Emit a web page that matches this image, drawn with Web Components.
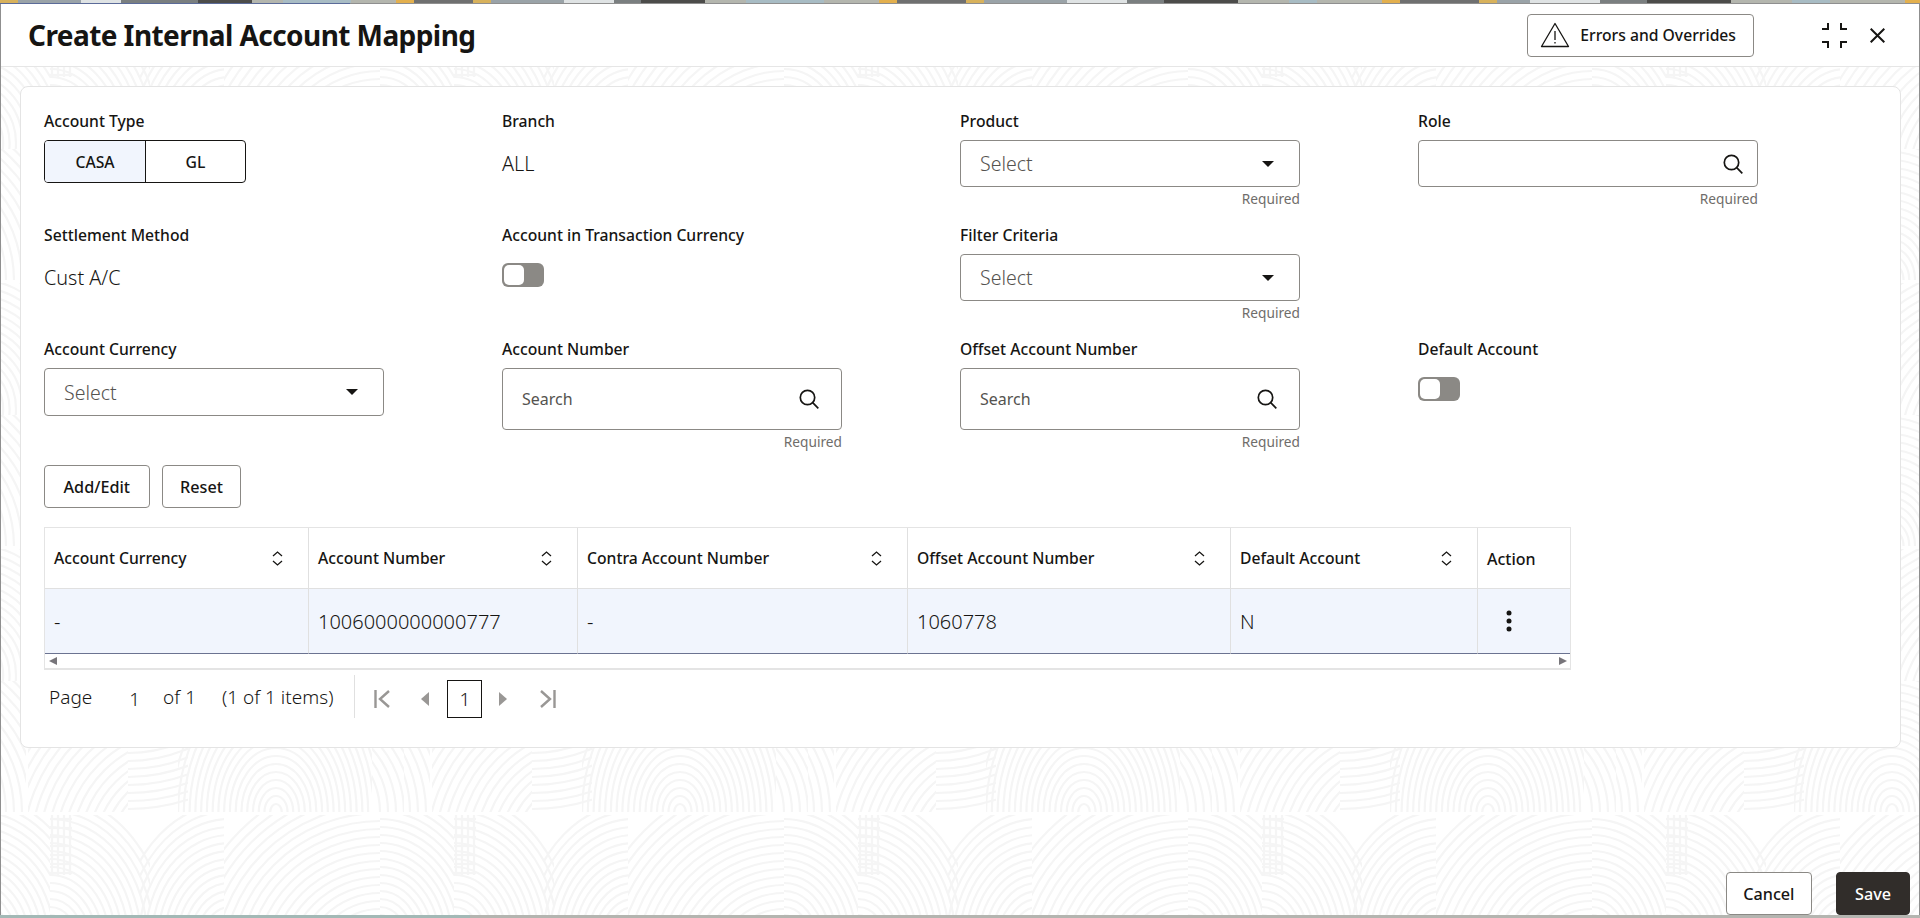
<!DOCTYPE html>
<html>
<head>
<meta charset="utf-8">
<title>Create Internal Account Mapping</title>
<style>
  html, body { margin: 0; height: 918px; overflow: hidden; background: #fff; }
  body { display: flex; flex-direction: column; font-family: "Noto Sans", "Open Sans", sans-serif; color: #161513; }
  im-dialog { flex: 1; min-height: 0; }
</style>
</head>
<body>
<im-strip></im-strip>
<im-dialog>
  <span slot="title">Create Internal Account Mapping</span>
  <im-button slot="actions" warn><im-icon name="warning"></im-icon>Errors and Overrides</im-button>
  <im-card>
    <im-form>
      <im-field label="Account Type"><im-segment></im-segment></im-field>
      <im-field label="Branch"><im-value>ALL</im-value></im-field>
      <im-field label="Product" hint="Required"><im-select></im-select></im-field>
      <im-field label="Role" hint="Required"><im-search kind="role"></im-search></im-field>

      <im-field label="Settlement Method"><im-value>Cust A/C</im-value></im-field>
      <im-field label="Account in Transaction Currency"><im-toggle></im-toggle></im-field>
      <im-field label="Filter Criteria" hint="Required"><im-select></im-select></im-field>
      <div></div>

      <im-field label="Account Currency"><im-select tall></im-select></im-field>
      <im-field label="Account Number" hint="Required"><im-search placeholder="Search"></im-search></im-field>
      <im-field label="Offset Account Number" hint="Required"><im-search placeholder="Search"></im-search></im-field>
      <im-field label="Default Account"><im-toggle></im-toggle></im-field>
    </im-form>
    <im-toolbar>
      <im-button pad="18.5">Add/Edit</im-button>
      <im-button pad="17.5">Reset</im-button>
    </im-toolbar>
    <im-table></im-table>
    <im-pager></im-pager>
  </im-card>
  <im-button slot="footer" pad="16.5">Cancel</im-button>
  <im-button slot="footer" pad="18" primary>Save</im-button>
</im-dialog>
<im-strip bottom></im-strip>

<script>
const ICONS = {
  warning: '<svg width="30" height="26" viewBox="0 0 30 26" fill="none" stroke="#161513" stroke-width="1.3"><path d="M15 1.5 L28.5 24.5 H1.5 Z" stroke-linejoin="round"/><path d="M15 9v9M15 20v1.6"/></svg>',
  collapse: '<svg width="25" height="25" viewBox="0 0 25 25" fill="none" stroke="#161513" stroke-width="2"><path d="M0 6h6V0M19 0v6h6M0 19h6v6M25 19h-6v6"/></svg>',
  close: '<svg width="15" height="15" viewBox="0 0 15 15" fill="none" stroke="#161513" stroke-width="2"><path d="M.7.7l13.6 13.6M14.3.7L.7 14.3"/></svg>',
  search: '<svg width="22" height="22" viewBox="0 0 22 22" fill="none" stroke="#161513" stroke-width="1.7"><circle cx="9.5" cy="9.5" r="7.2"/><path d="M14.7 14.7l5.6 5.6"/></svg>',
  caret: '<svg width="12" height="6" viewBox="0 0 12 6" fill="#161513"><path d="M0 0h12L6 6z"/></svg>',
  sort: '<svg width="11" height="15" viewBox="0 0 11 15" fill="none" stroke="#161513" stroke-width="1.3"><path d="M1 5l4.5-4 4.5 4M1 10l4.5 4 4.5-4"/></svg>',
  dots: '<svg width="6" height="22" viewBox="0 0 6 22" fill="#161513"><circle cx="3" cy="3" r="2.5"/><circle cx="3" cy="11" r="2.5"/><circle cx="3" cy="19" r="2.5"/></svg>',
  first: '<svg width="16" height="18" viewBox="0 0 16 18" fill="none" stroke="#999795" stroke-width="2.4"><path d="M1.5 0v18M15 1L6 9l9 8"/></svg>',
  prev: '<svg width="9" height="14" viewBox="0 0 9 14" fill="#999795"><path d="M9 0v14L1 7z"/></svg>',
  next: '<svg width="9" height="14" viewBox="0 0 9 14" fill="#999795"><path d="M0 0v14l8-7z"/></svg>',
  last: '<svg width="16" height="18" viewBox="0 0 16 18" fill="none" stroke="#999795" stroke-width="2.4"><path d="M14.5 0v18M1 1l9 8-9 8"/></svg>'
};

// base class, saves writing attachShadow everywhere
class ImElement extends HTMLElement {
  constructor() {
    super();
    this.attachShadow({ mode: 'open' });
  }

  connectedCallback() {
    this.render();
  }
}

class ImIcon extends ImElement {
  render() {
    this.shadowRoot.innerHTML = `
      <style>:host { display: inline-flex; } svg { display: block; }</style>
      ${ICONS[this.getAttribute('name')] || ''}
    `;
  }
}

class ImStrip extends ImElement {
  render() {
    // edges of the page that sits behind the dialog
    if (this.hasAttribute('bottom')) {
      this.shadowRoot.innerHTML = `
        <style>
          :host { display: block; flex: none; height: 3px; background: linear-gradient(90deg, #a3b9b6 0 470px, #b4b5b0 470px); }
        </style>
      `;
      return;
    }
    const colors = ['#d8b25c', '#9aa3a8', '#dfe3e4', '#7a7f80', '#4c4c4a', '#b4b6ae', '#a8bcc4', '#b4b6ae', '#e3b04e', '#6f7070'];
    const stops = [];
    for (let x = 0, i = 0; x < 1920; i++) {
      const w = i % colors.length === 0 || i % colors.length === 8 ? 18 : 26 + (i * 37) % 60;
      stops.push(`${colors[i % colors.length]} ${x}px ${x + w}px`);
      x += w;
    }
    this.shadowRoot.innerHTML = `
      <style>
        :host {
          display: block;
          flex: none;
          height: 4px;
          background:
            linear-gradient(90deg, #5b6b99 0 350px, #8f8f8f 350px) 0 100% / 100% 1px no-repeat,
            linear-gradient(90deg, ${stops.join(',')});
        }
      </style>
    `;
  }
}

class ImDialog extends ImElement {
  render() {
    this.shadowRoot.innerHTML = `
      <style>
        :host {
          display: flex;
          flex-direction: column;
          background: #fff;
          border: solid #8f8f8f;
          border-width: 0 1px;
          box-sizing: border-box;
          min-height: 0;
        }
        header {
          height: 62px;
          flex: none;
          display: flex;
          align-items: center;
          padding: 0 34px 0 27px;
          border-bottom: 1px solid #e6e6e6;
        }
        h1 { margin: 0; font-size: 28px; line-height: 40px; font-weight: 700; letter-spacing: -.57px; flex: 1; }
        .actions { display: flex; margin-right: 68px; }
        .win { display: flex; align-items: center; gap: 23px; }
        .stack { flex: 1; min-height: 0; display: grid; }
        .stack > * { grid-area: 1 / 1; min-height: 0; min-width: 0; }
        svg.bg { width: 100%; height: 100%; display: block; }
        .content { display: flex; flex-direction: column; padding: 19px 18px 0 19px; position: relative; }
        footer { margin-top: auto; display: flex; justify-content: flex-end; gap: 24px; margin-right: -9px; }
      </style>
      <header>
        <h1><slot name="title"></slot></h1>
        <div class="actions"><slot name="actions"></slot></div>
        <div class="win"><im-icon name="collapse"></im-icon><im-icon name="close"></im-icon></div>
      </header>
      <div class="stack">
        ${this.patternSvg()}
        <div class="content">
          <slot></slot>
          <footer><slot name="footer"></slot></footer>
        </div>
      </div>
    `;
  }

  arcs(cx, cy, from, to, step, sx, clip) {
    let out = '';
    for (let r = from; r <= to; r += step) {
      out += `<ellipse cx="${cx}" cy="${cy}" rx="${r * sx}" ry="${r}"/>`;
    }
    return `<g clip-path="url(#${clip})">${out}</g>`;
  }

  patternSvg() {
    // fingerprint-like watermark: two rows of arches, 404px wide tile
    const clip = (id, x, y, w, h) => `<clipPath id="${id}"><rect x="${x}" y="${y}" width="${w}" height="${h}"/></clipPath>`;
    const clips = [
      clip('a1', 178, 0, 194, 131), clip('a2', 28, 0, 100, 131), clip('a3', 128, 0, 60, 131), clip('a4', 372, 0, 32, 131), clip('a5', 0, 0, 26, 131),
      clip('b1', 50, 134, 100, 132), clip('b2', 140, 134, 84, 132), clip('b3', 224, 134, 156, 132), clip('b4', 380, 134, 24, 132), clip('b5', 0, 134, 50, 132)
    ].join('');
    let grid = '';
    for (let x = 52; x <= 72; x += 6) grid += `<path d="M${x} 134v60"/>`;
    for (let y = 138; y <= 194; y += 9) grid += `<path d="M50 ${y}h22"/>`;
    const body = [
      this.arcs(276, 131, 8, 210, 8, .72, 'a1'),
      this.arcs(185, 170, 50, 190, 8, 1, 'a2'),
      this.arcs(128, -70, 70, 200, 8, 1, 'a3'),
      this.arcs(300, 131, 80, 220, 8, 1, 'a4'),
      this.arcs(-110, 131, 100, 240, 8, 1, 'a5'),
      this.arcs(50, 260, 10, 150, 8, .8, 'b1'),
      this.arcs(230, 260, 10, 140, 8, .8, 'b2'),
      this.arcs(380, 290, 30, 200, 8, 1, 'b3'),
      this.arcs(380, 260, 10, 150, 8, .8, 'b4'),
      this.arcs(-24, 260, 10, 150, 8, .8, 'b5'),
      grid
    ].join('');
    return `
      <svg class="bg" aria-hidden="true">
        <defs>
          ${clips}
          <pattern id="wm" width="404" height="266" patternUnits="userSpaceOnUse" patternTransform="translate(-1 82)">
            <g fill="none" stroke="#f5f5f5" stroke-width="2.2">${body}</g>
          </pattern>
        </defs>
        <rect width="100%" height="100%" fill="url(#wm)"/>
      </svg>
    `;
  }
}

class ImCard extends ImElement {
  render() {
    this.shadowRoot.innerHTML = `
      <style>
        :host {
          display: block;
          height: 662px;
          box-sizing: border-box;
          background: #fff;
          border: 1px solid #e4e4e4;
          border-radius: 8px;
          padding: 24px 0 0 23px;
        }
      </style>
      <slot></slot>
    `;
  }
}

class ImForm extends ImElement {
  render() {
    this.shadowRoot.innerHTML = `
      <style>
        :host { display: grid; grid-template-columns: repeat(4, 458px); row-gap: 16px; }
      </style>
      <slot></slot>
    `;
  }
}

class ImField extends ImElement {
  render() {
    const hint = this.getAttribute('hint');
    this.shadowRoot.innerHTML = `
      <style>
        :host { display: block; width: 340px; min-height: 98px; }
        label { display: block; font-size: 15.7px; line-height: 20px; font-weight: 500; margin-bottom: 9px; white-space: nowrap; }
        .hint { text-align: right; font-size: 13.7px; line-height: 20px; color: #6f6d6a; margin-top: 2px; }
      </style>
      <label>${this.getAttribute('label')}</label>
      <slot></slot>
      ${hint ? `<div class="hint">${hint}</div>` : ''}
    `;
  }
}

class ImValue extends ImElement {
  render() {
    this.shadowRoot.innerHTML = `
      <style>
        :host { display: flex; align-items: center; height: 47px; font-size: 19.8px; font-weight: 300; }
      </style>
      <slot></slot>
    `;
  }
}

class ImSegment extends ImElement {
  render() {
    this.shadowRoot.innerHTML = `
      <style>
        :host { display: flex; width: 202px; height: 43px; box-sizing: border-box; border: 1px solid #161513; border-radius: 4px; overflow: hidden; font-size: 15.7px; font-weight: 500; }
        div { display: flex; align-items: center; justify-content: center; }
        .on { width: 100px; background: #f1f5fd; border-right: 1px solid #161513; }
        .off { flex: 1; }
      </style>
      <div class="on">CASA</div><div class="off">GL</div>
    `;
  }
}

class ImSelect extends ImElement {
  render() {
    const tall = this.hasAttribute('tall');
    this.shadowRoot.innerHTML = `
      <style>
        :host { display: flex; align-items: center; justify-content: space-between; height: ${tall ? 48 : 47}px; box-sizing: border-box; border: 1px solid #8b8985; border-radius: 4px; padding: 0 25px 0 19px; font-size: 19.5px; font-weight: 300; color: #55534f; background: #fff; }
      </style>
      <span>Select</span><im-icon name="caret"></im-icon>
    `;
  }
}

class ImSearch extends ImElement {
  render() {
    const role = this.getAttribute('kind') === 'role';
    this.shadowRoot.innerHTML = `
      <style>
        :host { display: flex; align-items: center; justify-content: space-between; height: ${role ? 47 : 62}px; box-sizing: border-box; border: 1px solid #8b8985; border-radius: 4px; padding: 0 ${role ? 13 : 21}px 0 19px; font-size: 16px; color: #55534f; background: #fff; }
      </style>
      <span>${this.getAttribute('placeholder') || ''}</span><im-icon name="search"></im-icon>
    `;
  }
}

class ImToggle extends ImElement {
  render() {
    this.shadowRoot.innerHTML = `
      <style>
        :host { display: block; width: 42px; height: 24px; margin-top: 18px; background: #8b8985; border-radius: 6px; position: relative; }
        i { position: absolute; left: 2px; top: 2px; width: 20px; height: 20px; background: #fff; border-radius: 5px; }
      </style>
      <i></i>
    `;
  }
}

class ImButton extends ImElement {
  render() {
    const pad = this.getAttribute('pad') || 14;
    const primary = this.hasAttribute('primary');
    const warn = this.hasAttribute('warn');
    this.shadowRoot.innerHTML = `
      <style>
        :host {
          display: inline-flex;
          align-items: center;
          gap: 10px;
          height: 43px;
          box-sizing: border-box;
          padding: ${warn ? '0 17px 0 12px' : `0 ${pad}px`};
          border: 1px solid ${primary ? '#312d2a' : '#8b8985'};
          border-radius: 4px;
          background: ${primary ? '#312d2a' : '#fff'};
          color: ${primary ? '#fff' : '#161513'};
          font-size: ${warn ? 15.7 : 16.2}px;
          font-weight: 500;
          white-space: nowrap;
        }
      </style>
      <slot></slot>
    `;
  }
}

class ImToolbar extends ImElement {
  render() {
    this.shadowRoot.innerHTML = `
      <style>:host { display: flex; gap: 12px; margin-top: 13px; }</style>
      <slot></slot>
    `;
  }
}

class ImTable extends ImElement {
  render() {
    const cols = [
      { head: 'Account Currency', w: 264, val: '-' },
      { head: 'Account Number', w: 269, val: '1006000000000777' },
      { head: 'Contra Account Number', w: 330, val: '-' },
      { head: 'Offset Account Number', w: 323, val: '1060778' },
      { head: 'Default Account', w: 247, val: 'N' },
      { head: 'Action', w: 92, action: true }
    ];
    const head = cols.map(c => c.action
      ? `<div class="th action">${c.head}</div>`
      : `<div class="th"><span>${c.head}</span><im-icon name="sort"></im-icon></div>`).join('');
    const row = cols.map(c => c.action
      ? `<div class="td dots"><im-icon name="dots"></im-icon></div>`
      : `<div class="td">${c.val}</div>`).join('');
    this.shadowRoot.innerHTML = `
      <style>
        :host { display: block; width: 1527px; margin-top: 19px; border: 1px solid #e4e4e4; border-bottom-width: 2px; box-sizing: border-box; background: #fff; }
        .grid { display: grid; grid-template-columns: ${cols.map(c => c.w + 'px').join(' ')}; width: 1525px; }
        .th, .td { box-sizing: border-box; border-right: 1px solid #e0e0e0; display: flex; align-items: center; padding-left: 9px; }
        .th:nth-child(6), .td:last-child { border-right: 0; }
        .th { height: 61px; justify-content: space-between; padding-right: 25px; font-size: 15.7px; font-weight: 500; border-bottom: 1px solid #e0e0e0; }
        .th.action { padding-top: 1px; font-size: 16px; }
        .td { height: 65px; background: #f1f5fd; font-size: 20px; font-weight: 300; border-bottom: 1px solid #6b7391; }
        .dots { padding-left: 28px; }
        .bar { height: 14px; display: flex; justify-content: space-between; align-items: center; padding: 0 3px 0 4px; }
        .bar i { width: 0; height: 0; border: solid transparent; border-width: 4px 0; }
        .l { border-right: 8px solid #77757a !important; }
        .r { border-left: 8px solid #77757a !important; }
      </style>
      <div class="grid">${head}${row}</div>
      <div class="bar"><i class="l"></i><i class="r"></i></div>
    `;
  }
}

class ImPager extends ImElement {
  render() {
    this.shadowRoot.innerHTML = `
      <style>
        :host { display: flex; align-items: center; height: 43px; margin-top: 5px; padding-left: 5px; font-size: 19px; font-weight: 300; white-space: nowrap; }
        .sep { width: 1px; height: 43px; background: #e0e0e0; margin: 0 19px 0 21px; }
        .num { margin: 4px 23px 0 37px; }
        .of { margin-right: 26px; }
        .box { width: 35px; height: 38px; box-sizing: border-box; border: 1px solid #161513; display: flex; align-items: center; justify-content: center; margin: 5px 17px 0 18px; }
        im-icon { margin-top: 5px; }
        .first { margin-right: 30px; }
        .last { margin-left: 32px; }
      </style>
      <span>Page</span>
      <span class="num">1</span>
      <span class="of">of 1</span>
      <span>(1 of 1 items)</span>
      <div class="sep"></div>
      <im-icon class="first" name="first"></im-icon>
      <im-icon name="prev"></im-icon>
      <div class="box">1</div>
      <im-icon name="next"></im-icon>
      <im-icon class="last" name="last"></im-icon>
    `;
  }
}

customElements.define('im-icon', ImIcon);
customElements.define('im-strip', ImStrip);
customElements.define('im-dialog', ImDialog);
customElements.define('im-card', ImCard);
customElements.define('im-form', ImForm);
customElements.define('im-field', ImField);
customElements.define('im-value', ImValue);
customElements.define('im-segment', ImSegment);
customElements.define('im-select', ImSelect);
customElements.define('im-search', ImSearch);
customElements.define('im-toggle', ImToggle);
customElements.define('im-button', ImButton);
customElements.define('im-toolbar', ImToolbar);
customElements.define('im-table', ImTable);
customElements.define('im-pager', ImPager);
</script>
</body>
</html>
